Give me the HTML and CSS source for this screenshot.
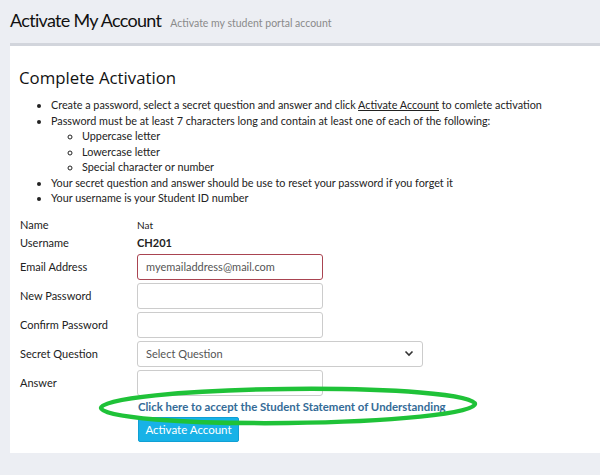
FILE: index.html
```html
<!DOCTYPE html>
<html>
<head>
<meta charset="utf-8">
<link rel="stylesheet" href="styles.css">
</head>
<body>
<div class="page-header">
  <h1 class="page-title">Activate My Account</h1>
  <span class="page-sub">Activate my student portal account</span>
</div>
<div class="card">
  <h2 class="card-title">Complete Activation</h2>
  <ul class="rules">
    <li>Create a password, select a secret question and answer and click <u>Activate Account</u> to comlete activation</li>
    <li>Password must be at least 7 characters long and contain at least one of each of the following:
      <ul class="sub">
        <li>Uppercase letter</li>
        <li>Lowercase letter</li>
        <li>Special character or number</li>
      </ul>
    </li>
    <li>Your secret question and answer should be use to reset your password if you forget it</li>
    <li>Your username is your Student ID number</li>
  </ul>
  <div class="form">
    <div class="row short"><span class="label">Name</span><span class="val small">Nat</span></div>
    <div class="row short user"><span class="label">Username</span><span class="val bold">CH201</span></div>
    <div class="row"><span class="label">Email Address</span><div class="input error">myemailaddress@mail.com</div></div>
    <div class="row"><span class="label">New Password</span><div class="input"></div></div>
    <div class="row"><span class="label">Confirm Password</span><div class="input"></div></div>
    <div class="row"><span class="label">Secret Question</span><div class="input select">Select Question<svg class="chev" width="10" height="7" viewBox="0 0 10 7"><path d="M1.5 1.5 L5 5 L8.5 1.5" fill="none" stroke="#333" stroke-width="1.6"/></svg></div></div>
    <div class="row"><span class="label">Answer</span><div class="input"></div></div>
    <div class="actions">
      <a class="accept">Click here to accept the Student Statement of Understanding</a>
      <button class="btn">Activate Account</button>
      <svg class="ring" width="386" height="44" viewBox="0 0 386 44"><ellipse cx="191" cy="22" rx="187" ry="17" fill="none" stroke="#1fc238" stroke-width="4.5" transform="rotate(-0.6 191 22)"/></svg>
    </div>
  </div>
</div>
</body>
</html>
```
FILE: styles.css
```css
html, body {
  margin: 0;
  padding: 0;
}
body {
  background: #eceef3;
  font-family: "Lato", "Noto Sans", sans-serif;
  color: #222;
  width: 600px;
  height: 475px;
  overflow: hidden;
}
.page-header {
  display: flex;
  align-items: baseline;
  gap: 9px;
  padding: 9px 10px 0 10px;
  height: 34px;
  box-sizing: border-box;
}
.page-title {
  margin: 0;
  font-family: "Lato", sans-serif;
  font-weight: 400;
  font-size: 18px;
  letter-spacing: -0.7px;
  color: #111;
}
.page-sub {
  font-family: "Lato", sans-serif;
  font-size: 10.5px;
  color: #8a8a8a;
}
.card {
  margin-top: 9px;
  margin-left: 10px;
  background: #fff;
  border-top: 3px solid #d2d5dc;
  height: 410px;
  box-sizing: border-box;
  padding: 20px 0 0 9px;
}
.card-title {
  margin: 0;
  font-family: "Open Sans", sans-serif;
  font-weight: 400;
  font-size: 16.8px;
  color: #111;
  line-height: 24px;
}
.rules {
  margin: 7px 0 0 0;
  padding-left: 32px;
  font-size: 10.8px;
  line-height: 15.5px;
  color: #222;
}
.rules .sub {
  margin: 0;
  padding-left: 31px;
  list-style: circle;
}
.form {
  margin-top: 10px;
  padding-left: 1px;
  font-size: 11px;
}
.row {
  display: flex;
  align-items: center;
  height: 26px;
  margin-bottom: 3px;
}
.row.short {
  height: 18px;
  margin-bottom: 0;
}
.row.short.user {
  margin-bottom: 2px;
}
.label {
  width: 117px;
  flex: none;
}
.val.small {
  font-size: 10px;
}
.val.bold {
  font-weight: bold;
}
.input {
  width: 186px;
  height: 26px;
  box-sizing: border-box;
  border: 1px solid #ccc;
  border-radius: 3px;
  padding: 0 8px;
  display: flex;
  align-items: center;
  color: #555;
  font-size: 11px;
}
.input.error {
  border-color: #a94451;
}
.input.select {
  width: 286px;
  justify-content: space-between;
}
.actions {
  position: relative;
  padding-left: 117px;
  display: flex;
  flex-direction: column;
  align-items: flex-start;
  gap: 3px;
  margin-top: 3px;
}
.accept {
  font-weight: bold;
  color: #346b97;
  font-size: 11.4px;
  line-height: 15px;
  padding-left: 1px;
}
.btn {
  background: #17b2e7;
  color: #fff;
  border: 1px solid #10a0d4;
  border-radius: 2px;
  font-family: "Lato", sans-serif;
  font-size: 11.5px;
  height: 25px;
  width: 101px;
  padding: 0;
  margin-left: 1px;
}
.ring {
  position: absolute;
  left: 77px;
  top: -15px;
}
```
